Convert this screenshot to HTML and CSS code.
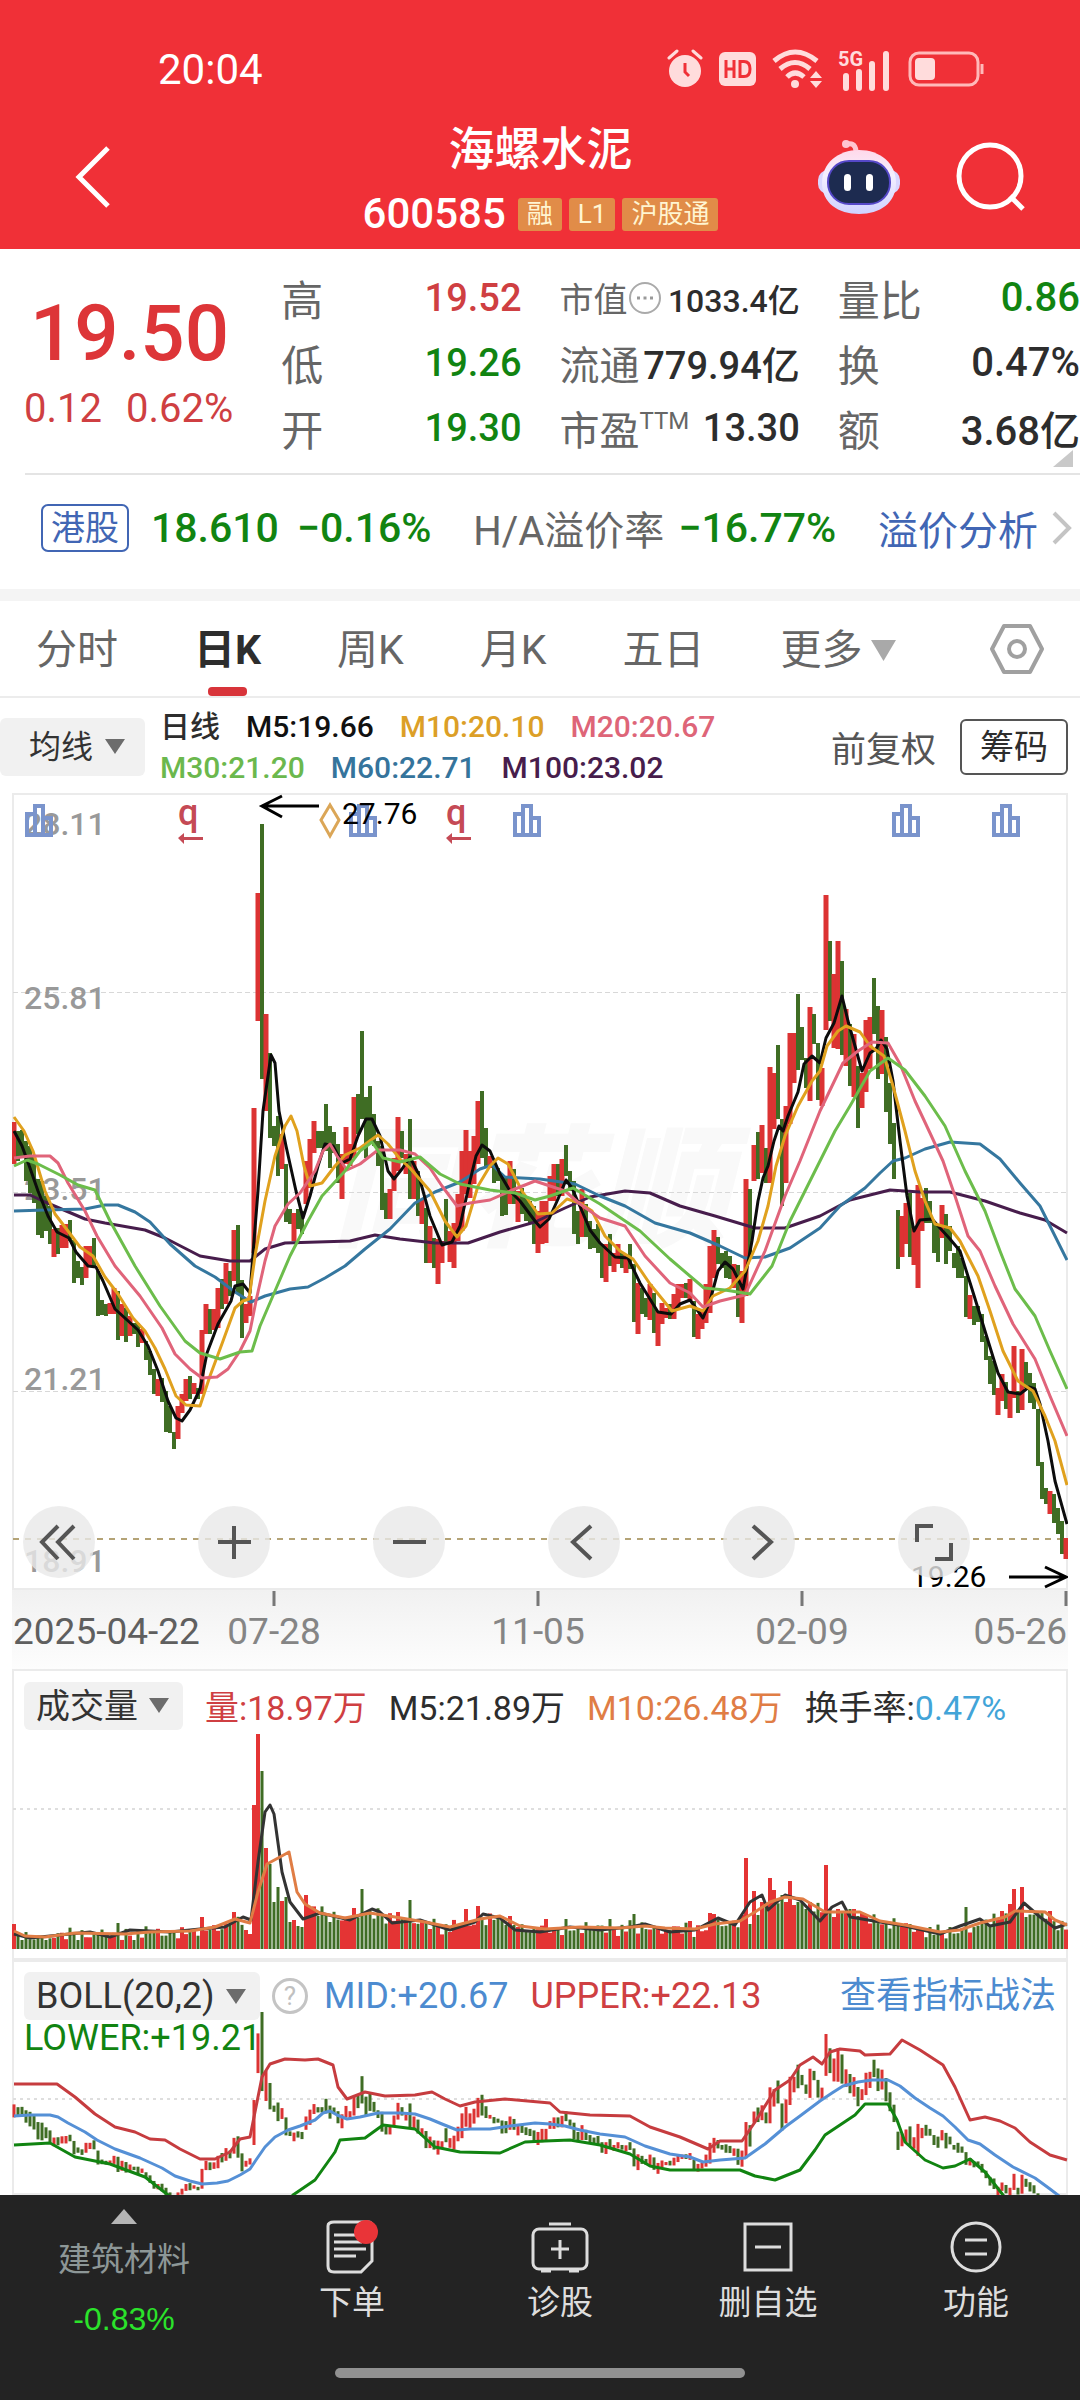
FILE: index.html
```html
<!DOCTYPE html>
<html lang="zh-CN">
<head>
    <meta charset="UTF-8">
    <meta name="viewport" content="width=device-width, initial-scale=1.0">
    <title>海螺水泥 600585</title>
    <link rel="stylesheet" href="styles.css">
</head>
<body>

<header>
    <div class="status-bar">
        <span class="time">20:04</span>
        <div class="status-icons">
            <svg width="36" height="40" viewBox="0 0 36 40">
                <circle cx="18" cy="22" r="16" fill="#ffdcdc"/>
                <path d="M2 9l8-7M34 9l-8-7" stroke="#ffdcdc" stroke-width="3" stroke-linecap="round"/>
                <path d="M18 14v9l4 4" stroke="#f03037" stroke-width="3" fill="none"/>
            </svg>
            <svg width="37" height="34" viewBox="0 0 37 34">
                <rect width="37" height="34" rx="6" fill="#ffdcdc"/>
                <path d="M7 8v18M15 8v18M7 17h8M21 9.500v15h4q6 0 6-7.500t-6-7.500z" fill="none" stroke="#f03037" stroke-width="3"/>
            </svg>
            <svg width="50" height="40" viewBox="0 0 50 40">
                <g fill="none" stroke="#ffdcdc" stroke-width="5">
                    <path d="M2 12q21-18 43 0"/>
                    <path d="M8 20q15-13 30 0"/>
                    <path d="M15 28q8-8 17 0"/>
                </g>
                <circle cx="23" cy="35" r="4" fill="#ffdcdc"/>
                <path d="M38 29l6-7 6 7zM38 32l6 7 6-7z" fill="#ffdcdc"/>
            </svg>
            <svg class="signal" width="54" height="46" viewBox="0 0 54 46">
                <text x="0" y="20">5G</text>
                <path d="M8 30v12M21 26v16M34 18v24M48 8v34" stroke="#ffdcdc" stroke-width="6" stroke-linecap="round"/>
            </svg>
            <svg width="76" height="36" viewBox="0 0 76 36">
                <rect x="2" y="2" width="68" height="32" rx="9" fill="none" stroke="#ffb9b9" stroke-width="3"/>
                <rect x="7" y="7" width="20" height="22" rx="4" fill="#ffdcdc"/>
                <path d="M74 13v10" stroke="#ffb9b9" stroke-width="3"/>
            </svg>
        </div>
    </div>
    <div class="title-bar">
        <button class="icon-button" aria-label="返回">
            <svg width="36" height="64" viewBox="0 0 36 64"><path d="M33 3L4 32l29 29" fill="none" stroke="#fff" stroke-width="5"/></svg>
        </button>
        <div class="stock-title">
            <h1>海螺水泥</h1>
            <div class="stock-code">
                <span class="code">600585</span>
                <span class="tag">融</span>
                <span class="tag">L1</span>
                <span class="tag">沪股通</span>
            </div>
        </div>
        <div class="title-actions">
            <button class="icon-button" aria-label="智能助手">
                <svg width="82" height="76" viewBox="0 0 82 76">
                    <defs>
                        <linearGradient id="bot-shell" x1="0" y1="0" x2="0" y2="1">
                            <stop offset="0" stop-color="#ffd9ea"/>
                            <stop offset="0.4" stop-color="#f4efff"/>
                            <stop offset="1" stop-color="#cfd2ff"/>
                        </linearGradient>
                    </defs>
                    <path d="M27 6q10-4 11 6" fill="none" stroke="#ffc4d2" stroke-width="5"/>
                    <circle cx="28" cy="5" r="4" fill="#ffc4d2"/>
                    <rect x="0" y="31" width="82" height="24" rx="10" fill="#d9d6ff"/>
                    <path d="M41 11C62 11 78 24 78 44C78 64 62 75 41 75C20 75 4 64 4 44C4 24 20 11 41 11z" fill="url(#bot-shell)"/>
                    <rect x="10" y="22" width="62" height="43" rx="21" fill="#1d2b50" stroke="#5548c8" stroke-width="2"/>
                    <rect x="26" y="35" width="7" height="17" rx="3.500" fill="#fff"/>
                    <rect x="48" y="35" width="7" height="17" rx="3.500" fill="#fff"/>
                </svg>
            </button>
            <button class="icon-button" aria-label="搜索">
                <svg width="70" height="70" viewBox="0 0 70 70"><circle cx="34" cy="34" r="31" fill="none" stroke="#fff" stroke-width="5"/><path d="M54 54l13 13" stroke="#fff" stroke-width="5"/></svg>
            </button>
        </div>
    </div>
</header>

<section class="quote">
    <div class="price">
        <div class="price-now">19.50</div>
        <div class="price-change"><span>0.12</span><span>0.62%</span></div>
    </div>
    <dl class="stats">
        <div><dt>高</dt><dd class="up">19.52</dd></div>
        <div><dt>低</dt><dd class="down">19.26</dd></div>
        <div><dt>开</dt><dd class="down">19.30</dd></div>
    </dl>
    <dl class="stats">
        <div class="small">
            <dt>市值<svg width="34" height="34" viewBox="0 0 34 34"><circle cx="17" cy="17" r="15" fill="none" stroke="#aaa" stroke-width="2"/><path d="M9 17h3M15.500 17h3M22 17h3" stroke="#999" stroke-width="3"/></svg></dt>
            <dd>1033.4亿</dd>
        </div>
        <div class="mid"><dt>流通</dt><dd>779.94亿</dd></div>
        <div class="mid"><dt>市盈<sup>TTM</sup></dt><dd>13.30</dd></div>
    </dl>
    <dl class="stats last">
        <div><dt>量比</dt><dd class="down">0.86</dd></div>
        <div><dt>换</dt><dd>0.47%</dd></div>
        <div><dt>额</dt><dd>3.68亿</dd></div>
    </dl>
    <span class="corner"></span>
</section>

<section class="premium">
    <span class="hk-tag">港股</span>
    <span class="hk-price">18.610</span>
    <span class="hk-change">−0.16%</span>
    <span class="ha-label">H/A溢价率</span>
    <span class="ha-rate">−16.77%</span>
    <a href="#premium">溢价分析<svg width="22" height="36" viewBox="0 0 22 36"><path d="M3 3l15 15L3 33" fill="none" stroke="#c4c4c4" stroke-width="4"/></svg></a>
</section>

<nav class="tabs">
    <button>分时</button>
    <button class="active">日K</button>
    <button>周K</button>
    <button>月K</button>
    <button>五日</button>
    <button class="more">更多<svg width="25" height="21" viewBox="0 0 25 21"><path d="M0 0h25L12.500 21z" fill="#a9a9a9"/></svg></button>
    <button class="settings" aria-label="设置">
        <svg width="54" height="52" viewBox="0 0 54 52"><path d="M14 3h26l12 23-12 23H14L2 26z" fill="none" stroke="#a0a0a0" stroke-width="4" stroke-linejoin="round"/><circle cx="27" cy="26" r="8" fill="none" stroke="#a0a0a0" stroke-width="4"/></svg>
    </button>
</nav>

<section class="ma-bar">
    <label class="picker picker-ma">
        <select aria-label="主图指标"><option>均线</option></select>
        <svg width="20" height="15" viewBox="0 0 20 15"><path d="M0 0h20L10 15z" fill="#6c6c6c"/></svg>
    </label>
    <div class="ma-values">
        <div><span>日线</span><span class="m5">M5:19.66</span><span class="m10">M10:20.10</span><span class="m20">M20:20.67</span></div>
        <div><span class="m30">M30:21.20</span><span class="m60">M60:22.71</span><span class="m100">M100:23.02</span></div>
    </div>
    <button class="adjust">前复权</button>
    <button class="chips">筹码</button>
</section>

<section class="main-chart">
    <svg id="kline" viewBox="12 792 1056 876">
        <defs>
            <linearGradient id="axis-fade" x1="0" y1="0" x2="0" y2="1">
                <stop offset="0" stop-color="#f1f1f1"/>
                <stop offset="1" stop-color="#fdfdfd"/>
            </linearGradient>
        </defs>
        <rect x="12" y="1589" width="1056" height="79" fill="url(#axis-fade)"/>
        <rect class="frame" x="13" y="793" width="1054" height="795"/>
        <text class="watermark" x="332" y="1235">同花顺</text>
        <path class="grid" d="M13 991.500H1067M13 1191.500H1067M13 1390.500H1067"/>
        <path class="last-price" d="M13 1538H1067"/>
        <g class="scale">
            <text x="24" y="834">28.11</text>
            <text x="24" y="1008">25.81</text>
            <text x="24" y="1199">23.51</text>
            <text x="24" y="1389">21.21</text>
            <text x="24" y="1571">18.91</text>
        </g>
        <g id="events"></g>
        <g id="candles"></g>
        <g id="averages"></g>
        <g class="arrow">
            <path d="M319 805H263M282 795l-20 10 20 11"/>
            <path d="M1009 1576h56M1045 1566l21 10-21 10"/>
        </g>
        <path d="M330 804l9 15-9 16-9-16z" fill="none" stroke="#dba657" stroke-width="3"/>
        <g class="extreme">
            <text x="342" y="823">27.76</text>
            <text x="911" y="1586">19.26</text>
        </g>
        <path d="M274 1590v15M538 1590v15M802 1590v15M1066 1590v15" stroke="#777" stroke-width="3"/>
        <g class="dates">
            <text class="first" x="13" y="1643">2025-04-22</text>
            <text x="274" y="1643" text-anchor="middle">07-28</text>
            <text x="538" y="1643" text-anchor="middle">11-05</text>
            <text x="802" y="1643" text-anchor="middle">02-09</text>
            <text x="1067" y="1643" text-anchor="end">05-26</text>
        </g>
    </svg>
    <div class="chart-tools">
        <button aria-label="最早"><svg viewBox="0 0 72 72"><path d="M35 20L19 36l16 17M51 20L35 36l16 17"/></svg></button>
        <button aria-label="放大"><svg viewBox="0 0 72 72"><path d="M20 36h33M36 20v33"/></svg></button>
        <button aria-label="缩小"><svg viewBox="0 0 72 72"><path d="M20 36h33"/></svg></button>
        <button aria-label="左移"><svg viewBox="0 0 72 72"><path d="M43 20L25 36l18 17"/></svg></button>
        <button aria-label="右移"><svg viewBox="0 0 72 72"><path d="M30 20l18 16-18 17"/></svg></button>
        <button aria-label="全屏"><svg viewBox="0 0 72 72"><path d="M19 36V20h16M53 37v16H37"/></svg></button>
    </div>
</section>

<section class="sub-chart">
    <div class="sub-head">
        <label class="picker">
            <select aria-label="副图指标一"><option>成交量</option></select>
            <svg width="20" height="15" viewBox="0 0 20 15"><path d="M0 0h20L10 15z" fill="#6c6c6c"/></svg>
        </label>
        <span class="vol-now">量:18.97万</span>
        <span>M5:21.89万</span>
        <span class="vol-m10">M10:26.48万</span>
        <span>换手率:<span class="turnover">0.47%</span></span>
    </div>
    <svg id="volume" viewBox="12 1730 1056 228">
        <path class="dots" d="M13 1807H1067"/>
    </svg>
</section>

<section class="sub-chart">
    <svg id="boll" viewBox="12 1958 1056 235">
        <path class="dots" d="M13 2097H1067"/>
    </svg>
    <div class="boll-head">
        <div class="sub-head">
            <label class="picker">
                <select aria-label="副图指标二"><option>BOLL(20,2)</option></select>
                <svg width="20" height="15" viewBox="0 0 20 15"><path d="M0 0h20L10 15z" fill="#6c6c6c"/></svg>
            </label>
            <button class="help">?</button>
            <span class="mid-value">MID:+20.67</span>
            <span class="upper-value">UPPER:+22.13</span>
            <a href="#tactics">查看指标战法</a>
        </div>
        <div class="lower-value">LOWER:+19.21</div>
    </div>
</section>

<footer>
    <nav class="bottom-nav">
        <a href="#sector" class="sector">
            <svg width="26" height="15" viewBox="0 0 26 15"><path d="M13 0l13 15H0z" fill="#b5b5b5"/></svg>
            <span class="sector-name">建筑材料</span>
            <span class="sector-change">-0.83%</span>
        </a>
        <a href="#order">
            <svg width="54" height="54" viewBox="0 0 54 54">
                <path d="M9 2h34q4 0 4 4v35L36 52H9q-6 0-6-6V6q0-4 6-4z"/>
                <path d="M9 15h24M9 22h28M9 29h32M9 36h22"/>
                <circle class="dot" cx="41" cy="12" r="12"/>
            </svg>
            <span>下单</span>
        </a>
        <a href="#diagnose">
            <svg width="58" height="54" viewBox="0 0 58 54">
                <rect x="2" y="9" width="54" height="40" rx="6"/>
                <path d="M18 4h22M20 29h18M29 20v19M10 51h10M38 51h10"/>
            </svg>
            <span>诊股</span>
        </a>
        <a href="#remove">
            <svg width="54" height="54" viewBox="0 0 54 54">
                <rect x="4" y="4" width="46" height="46"/>
                <path d="M14 27h26"/>
            </svg>
            <span>删自选</span>
        </a>
        <a href="#features">
            <svg width="54" height="54" viewBox="0 0 54 54">
                <circle cx="27" cy="27" r="24"/>
                <path d="M16 20h22M16 34h22"/>
            </svg>
            <span>功能</span>
        </a>
    </nav>
    <div class="home-bar"></div>
</footer>

<script src="chart.js"></script>
</body>
</html>
```

FILE: styles.css
```css
* {
    box-sizing: border-box;
}

body {
    margin: 0;
    font-family: Roboto, "Noto Sans CJK SC", sans-serif;
    background-color: #fff;
    color: #2d2d2d;
}

button, select {
    font: inherit;
    color: inherit;
    padding: 0;
    border: none;
    background: none;
}

button svg {
    display: block;
}

a {
    text-decoration: none;
}

header {
    height: 249px;
    background-color: #f03037;
    color: white;
}

.status-bar {
    display: flex;
    justify-content: space-between;
    align-items: center;
    padding: 44px 96px 0 158px;
    height: 94px;
}

.time {
    font-size: 42px;
}

.status-icons {
    display: flex;
    align-items: center;
    gap: 16px;
}

.signal {
    overflow: visible;
}

.signal text {
    font-size: 20px;
    font-weight: bold;
    fill: #ffdcdc;
}

.title-bar {
    display: grid;
    grid-template-columns: 1fr auto 1fr;
    align-items: center;
    padding: 20px 54px 0 75px;
}

.icon-button {
    padding-bottom: 4px;
}

.stock-title {
    text-align: center;
    padding-right: 20px;
}

h1 {
    margin: 0;
    font-size: 46px;
    font-weight: 500;
    line-height: 70px;
}

.stock-code {
    display: flex;
    align-items: center;
    gap: 7px;
    line-height: 60px;
}

.code {
    font-size: 42px;
    font-weight: 500;
    margin-right: 5px;
}

.tag {
    padding: 0 9px;
    font-size: 26px;
    line-height: 33px;
    border-radius: 3px;
    background-color: #e18c48;
    color: #fff5d2;
}

.title-actions {
    display: flex;
    justify-content: flex-end;
    align-items: center;
    gap: 56px;
}

.quote {
    position: relative;
    display: grid;
    grid-template-columns: 243fr 240fr 240fr 242fr;
    column-gap: 38px;
    height: 226px;
    padding-top: 16px;
}

.quote::after {
    content: "";
    position: absolute;
    left: 25px;
    right: 0;
    bottom: 0;
    border-bottom: 2px solid #e4e4e4;
}

.price {
    color: #dd3538;
}

.price-now {
    padding: 22px 0 0 30px;
    font-size: 78px;
    font-weight: 500;
    line-height: 94px;
}

.price-change {
    display: flex;
    gap: 24px;
    padding-left: 24px;
    font-size: 40px;
    line-height: 56px;
    color: #cf3f42;
}

.stats {
    margin: 0;
}

.stats div {
    display: flex;
    justify-content: space-between;
    align-items: center;
    height: 65px;
    white-space: nowrap;
}

.stats dt {
    display: flex;
    align-items: center;
    font-size: 42px;
    color: #666;
}

.stats dd {
    margin: 0;
    font-size: 38px;
    font-weight: 500;
}

.stats.last dd {
    font-size: 40px;
}

.stats .small dt {
    font-size: 34px;
}

.stats .small dd {
    font-size: 32px;
}

.stats .mid dt {
    font-size: 40px;
}

.stats .mid dd {
    font-size: 38px;
}

.stats sup {
    align-self: flex-start;
    font-size: 24px;
    line-height: 44px;
}

.stats .up {
    color: #cf3f42;
}

.stats .down {
    color: #118411;
}

.corner {
    position: absolute;
    right: 7px;
    bottom: 8px;
    border-left: 20px solid transparent;
    border-bottom: 17px solid #c9c9c9;
}

.premium {
    display: flex;
    align-items: center;
    height: 126px;
    padding: 0 7px 8px 41px;
    font-size: 41px;
    border-bottom: 12px solid #f4f4f4;
    white-space: nowrap;
}

.hk-tag {
    margin-right: 22px;
    padding: 0 8px;
    font-size: 34px;
    line-height: 44px;
    border: 2px solid #4166b4;
    border-radius: 7px;
    color: #4166b4;
}

.hk-price, .hk-change, .ha-rate {
    font-weight: 500;
    color: #118411;
}

.hk-price {
    margin-right: 18px;
}

.ha-label {
    margin-left: auto;
    margin-right: 14px;
    font-size: 40px;
    color: #666;
}

.premium a {
    display: flex;
    align-items: center;
    gap: 13px;
    margin-left: auto;
    font-size: 40px;
    color: #4166b4;
}

.tabs {
    display: flex;
    align-items: center;
    gap: 76px;
    height: 97px;
    padding: 0 36px;
    border-bottom: 2px solid #ececec;
}

.tabs button {
    position: relative;
    padding-top: 4px;
    font-size: 41px;
    line-height: 91px;
    color: #666;
    white-space: nowrap;
}

.tabs .active {
    font-weight: 700;
    color: #2d2d2d;
}

.tabs .active::after {
    content: "";
    position: absolute;
    left: 14px;
    right: 14px;
    bottom: 0;
    height: 9px;
    border-radius: 4px;
    background-color: #d8343a;
}

.tabs .more {
    display: flex;
    align-items: center;
    gap: 8px;
}

.tabs .settings {
    margin-left: auto;
    padding-top: 0;
}

.ma-bar {
    display: flex;
    align-items: center;
    height: 95px;
    padding: 2px 12px 0 0;
    font-size: 30px;
    white-space: nowrap;
}

.picker {
    display: flex;
    align-items: center;
    gap: 11px;
    height: 48px;
    padding: 0 14px 0 12px;
    border-radius: 6px;
    background-color: #f1f1f1;
}

.picker select {
    appearance: none;
    color: #333;
}

.picker-ma {
    height: 58px;
    margin-right: 15px;
    padding: 0 20px 0 29px;
    font-size: 32px;
}

.ma-values {
    font-weight: 500;
    line-height: 41px;
}

.ma-values div {
    display: flex;
    gap: 26px;
}

.m5 { color: #111; }
.m10 { color: #dc9f27; }
.m20 { color: #de6578; }
.m30 { color: #6bb84d; }
.m60 { color: #35749c; }
.m100 { color: #471d4c; }

.adjust {
    margin-left: auto;
    font-size: 35px;
    color: #555;
}

.chips {
    margin-left: 24px;
    padding: 0 18px;
    font-size: 34px;
    line-height: 52px;
    border: 2px solid #555;
    border-radius: 6px;
}

.main-chart {
    position: relative;
    padding: 0 12px;
}

.main-chart svg, .sub-chart > svg {
    display: block;
    width: 100%;
}

.frame {
    fill: none;
    stroke: #ebebeb;
    stroke-width: 2;
}

.watermark {
    font-size: 132px;
    font-weight: 900;
    font-style: italic;
    fill: #f9f9f9;
}

.grid {
    stroke: #d8d8d8;
    stroke-dasharray: 5 3;
}

.last-price {
    stroke: #b4a376;
    stroke-width: 2;
    stroke-dasharray: 6 6;
}

.scale text {
    font-size: 32px;
    font-weight: 500;
    fill: #999;
}

.event-q {
    font-size: 36px;
    font-weight: 500;
    fill: #c54a55;
}

.event-arrow {
    fill: #c54a55;
}

.event-report {
    fill: none;
    stroke: #7a94cc;
    stroke-width: 4;
}

.arrow path {
    fill: none;
    stroke: #000;
    stroke-width: 3;
}

.extreme text {
    font-size: 30px;
    fill: #000;
}

.dates text {
    font-size: 37px;
    fill: #858585;
}

.dates .first {
    fill: #5f5f5f;
}

.line {
    fill: none;
    stroke-width: 3;
    stroke-linejoin: round;
}

.chart-tools {
    position: absolute;
    left: 23px;
    right: 110px;
    bottom: 91px;
    display: flex;
    justify-content: space-between;
}

.chart-tools button {
    width: 72px;
    height: 72px;
    border-radius: 50%;
    background-color: rgba(232, 232, 232, 0.8);
}

.chart-tools path {
    fill: none;
    stroke: #555;
    stroke-width: 4;
}

.sub-chart {
    position: relative;
    margin: 0 12px;
    box-shadow: inset 0 0 0 2px #ebebeb;
}

.sub-head {
    display: flex;
    align-items: center;
    gap: 22px;
    padding: 12px 12px 2px;
    font-size: 34px;
    white-space: nowrap;
}

.vol-now { color: #cf3f42; }
.vol-m10 { color: #e07d45; }
.turnover { color: #42a4d8; }

.dots {
    stroke: #dedede;
    stroke-width: 2;
    stroke-dasharray: 3 4;
}

.boll-head {
    position: absolute;
    top: 0;
    left: 0;
    right: 0;
}

.boll-head .sub-head {
    gap: 16px;
    padding-bottom: 0;
    font-size: 36px;
}

.sub-head .help {
    width: 36px;
    height: 36px;
    margin-left: -4px;
    font-size: 26px;
    line-height: 30px;
    border: 3px solid #c4c4c4;
    border-radius: 50%;
    color: #c0c0c0;
}

.mid-value { color: #4c8bd0; }

.upper-value {
    margin-left: 6px;
    color: #cf3f42;
}

.sub-head a {
    margin-left: auto;
    font-size: 36px;
    line-height: 48px;
    color: #4c8bd0;
}

.lower-value {
    padding-left: 12px;
    font-size: 36px;
    line-height: 36px;
    color: #118411;
}

footer {
    position: relative;
    height: 207px;
    background-color: #232323;
}

.bottom-nav {
    display: grid;
    grid-template-columns: 248fr 208fr 208fr 208fr 208fr;
}

.bottom-nav a {
    display: flex;
    flex-direction: column;
    align-items: center;
    padding-top: 25px;
    font-size: 33px;
    line-height: 57px;
    color: #ddd;
}

.bottom-nav a:not(.sector) svg {
    fill: none;
    stroke: #ddd;
    stroke-width: 3;
}

.bottom-nav .dot {
    fill: #e93438;
    stroke: none;
}

.bottom-nav .sector {
    padding-top: 14px;
}

.sector-name {
    margin-top: 7px;
    color: #8d9797;
}

.sector-change {
    font-family: "Liberation Sans", sans-serif;
    font-size: 32px;
    line-height: 62px;
    color: #2be32b;
}

.home-bar {
    position: absolute;
    left: 31%;
    right: 31%;
    bottom: 24px;
    height: 10px;
    border-radius: 5px;
    background-color: #919191;
}
```

FILE: chart.js
```js
const RED = '#dc3333';
const GREEN = '#3f6d24';
const STEP = 4;
const START = 14;

// One entry per trading day: colour, top and bottom of the bar
const days = `
r1121,1163 g1130,1160 g1129,1157 g1140,1180 g1145,1192 g1155,1202 g1178,1234 g1180,1237 g1195,1230 g1205,1243
r1228,1256 g1227,1253 r1224,1247 r1223,1247 g1219,1240 g1239,1282 g1260,1277 g1266,1284 r1245,1277 r1245,1265
g1237,1266 g1270,1315 g1299,1314 g1303,1315 r1302,1313 r1287,1313 g1290,1339 r1303,1335 g1307,1341 r1315,1335
g1322,1333 g1322,1346 r1328,1342 g1340,1359 g1350,1374 g1368,1393 r1378,1395 g1377,1401 g1390,1431 g1405,1432
g1431,1448 r1405,1438 r1393,1412 r1378,1400 g1375,1398 r1382,1393 g1387,1398 r1329,1393 r1303,1333 g1308,1333
r1308,1329 r1287,1327 g1278,1308 r1262,1303 g1270,1295 r1229,1280 g1224,1293 g1279,1337 r1303,1322 r1295,1315
r1107,1252 r892,1020 g823,1078 r1013,1110 g1052,1137 g1125,1145 g1115,1175 r1133,1168 g1163,1221 g1208,1223
r1212,1240 g1208,1228 g1210,1233 r1160,1203 r1138,1187 r1120,1152 g1130,1147 g1130,1147 g1103,1150 g1125,1167
g1131,1152 g1143,1182 r1153,1198 r1126,1163 r1143,1165 r1096,1157 g1093,1133 g1030,1118 g1096,1157 g1085,1142
g1113,1145 g1140,1165 g1145,1209 g1192,1218 r1188,1218 r1157,1190 r1116,1170 g1130,1157 r1153,1173 g1118,1198
r1160,1198 g1170,1215 r1198,1223 g1207,1262 r1225,1262 g1237,1267 r1238,1283 r1240,1262 g1198,1243 r1230,1261
r1222,1267 r1193,1240 r1150,1230 r1129,1193 r1150,1197 r1135,1183 r1100,1163 g1090,1157 g1127,1165 r1155,1167
g1162,1182 g1167,1180 g1173,1215 g1175,1214 r1160,1203 g1168,1203 r1190,1221 g1187,1213 g1195,1220 g1200,1223
g1205,1243 r1210,1252 r1200,1243 r1200,1242 r1175,1200 r1163,1200 g1163,1195 r1158,1195 g1144,1175 g1170,1190
g1180,1233 g1210,1243 r1188,1236 g1203,1236 g1220,1248 g1228,1247 g1223,1252 g1243,1277 r1243,1281 g1233,1265
r1252,1271 r1243,1263 g1252,1267 r1253,1272 g1243,1268 g1263,1321 r1282,1333 g1287,1313 g1297,1316 r1283,1319
g1292,1332 r1310,1345 r1302,1323 r1307,1317 g1303,1318 r1293,1318 r1283,1307 r1283,1297 g1282,1297 r1278,1300
g1300,1336 r1313,1338 r1310,1328 r1283,1322 r1245,1312 r1229,1277 g1236,1263 g1252,1267 g1250,1277 g1255,1278
r1263,1287 g1264,1316 r1270,1322 r1178,1295 g1188,1257 r1144,1180 g1131,1178 r1124,1172 g1147,1182 r1066,1182
r1072,1128 g1044,1118 g1118,1205 r1105,1182 r1032,1123 r1032,1082 g993,1069 g1026,1059 g1057,1087 r1006,1100
g1013,1043 g1042,1099 r1067,1105 r894,1029 g940,1020 r973,1047 r940,1048 g960,1054 r1008,1065 g1023,1085
r1033,1096 g1065,1127 r1072,1107 r1019,1091 r1016,1068 g977,1033 g1005,1078 r1009,1073 g1036,1111 g1082,1143
g1122,1178 g1209,1268 r1215,1256 r1202,1243 g1192,1256 r1227,1264 r1184,1287 r1197,1230 g1187,1222 g1200,1222
g1220,1252 g1225,1261 r1204,1237 g1213,1263 g1225,1250 g1252,1267 g1245,1277 g1257,1277 g1275,1316 r1294,1318
g1305,1324 g1305,1321 g1313,1341 g1335,1359 g1355,1383 g1360,1394 r1387,1414 r1373,1400 g1381,1408 r1390,1417
r1345,1397 g1390,1412 r1348,1409 g1361,1387 g1372,1402 g1382,1408 g1408,1465 g1461,1498 g1487,1503 r1490,1513
g1493,1522 g1507,1533 g1520,1553 r1537,1558
`.trim().split(/\s+/).map(function (item) {
    const [top, bottom] = item.slice(1).split(',').map(Number);
    return { up: item[0] === 'r', top, bottom };
});

const averages = {
    m100: '14,1194 30,1194 45,1201 85,1218 105,1222 145,1229 165,1237 200,1255 230,1260 250,1260 265,1248 285,1242 350,1240 375,1234 400,1238 435,1242 468,1242 500,1231 535,1221 565,1207 590,1196 625,1190 650,1192 680,1205 715,1215 755,1227 785,1227 820,1215 850,1199 890,1189 920,1191 950,1191 985,1200 1020,1212 1045,1219 1067,1232',
    m60: '14,1210 45,1209 85,1208 105,1204 118,1204 135,1211 150,1221 170,1243 195,1265 215,1276 235,1291 251,1301 265,1295 290,1288 308,1286 325,1277 345,1265 365,1248 390,1228 415,1202 435,1191 460,1181 480,1168 492,1164 505,1176 540,1178 575,1183 600,1195 625,1205 655,1222 690,1232 720,1245 745,1257 765,1256 790,1247 820,1227 840,1205 865,1187 880,1172 893,1160 905,1157 925,1148 950,1141 980,1143 1000,1158 1020,1182 1040,1205 1067,1259',
    m5: '14,1130 22,1145 30,1167 38,1190 48,1215 57,1231 69,1237 76,1251 88,1265 96,1266 103,1280 115,1308 126,1318 138,1329 148,1345 158,1370 168,1400 176,1417 182,1420 190,1409 200,1388 207,1352 218,1323 231,1300 235,1285 243,1283 250,1292 254,1240 258,1190 263,1110 271,1054 275,1062 279,1110 286,1145 296,1190 303,1217 310,1195 318,1165 325,1143 333,1145 342,1162 350,1158 358,1135 366,1118 372,1118 380,1135 388,1170 394,1178 402,1168 410,1156 418,1172 430,1215 442,1244 452,1241 460,1225 470,1180 476,1155 482,1144 490,1150 500,1173 510,1190 520,1200 535,1220 540,1226 549,1218 558,1198 566,1179 572,1187 582,1210 590,1229 600,1242 615,1256 628,1257 640,1282 658,1311 671,1313 680,1303 690,1299 703,1317 710,1300 718,1270 725,1261 733,1268 743,1288 752,1240 758,1200 763,1177 768,1165 774,1140 779,1125 783,1130 788,1115 798,1091 804,1063 812,1055 820,1062 826,1037 834,1022 842,995 848,1020 855,1045 862,1070 870,1052 876,1048 881,1039 887,1048 893,1080 900,1140 907,1195 914,1230 920,1219 932,1218 940,1227 950,1238 960,1250 972,1288 985,1330 998,1372 1008,1391 1020,1393 1029,1386 1035,1388 1040,1403 1048,1440 1055,1480 1067,1523',
    m10: '14,1116 24,1130 33,1150 45,1190 55,1213 68,1230 80,1246 93,1255 105,1276 118,1293 133,1317 145,1330 155,1347 165,1368 176,1395 186,1404 200,1405 210,1375 223,1340 235,1307 243,1300 249,1298 255,1255 265,1200 275,1155 285,1125 291,1115 297,1130 304,1165 310,1185 322,1182 335,1165 345,1154 360,1147 378,1134 388,1143 400,1158 410,1167 430,1190 445,1220 457,1236 466,1225 478,1185 490,1165 498,1157 508,1163 522,1190 538,1213 552,1212 567,1198 580,1202 592,1210 605,1235 620,1250 633,1258 650,1283 672,1310 690,1305 703,1310 713,1295 730,1287 745,1270 758,1240 768,1205 776,1165 785,1135 798,1105 812,1080 820,1070 827,1045 838,1030 846,1025 860,1031 870,1045 884,1055 893,1085 905,1130 915,1170 925,1200 935,1223 950,1227 960,1240 978,1275 990,1310 1003,1350 1018,1380 1033,1390 1045,1415 1055,1440 1067,1484',
    m20: '14,1157 30,1155 50,1155 58,1162 68,1182 85,1210 97,1235 115,1265 140,1295 162,1327 175,1353 190,1368 202,1377 217,1376 228,1368 240,1350 250,1330 256,1300 265,1260 275,1225 288,1203 300,1192 315,1170 323,1150 330,1143 337,1155 347,1169 360,1163 378,1149 400,1149 415,1153 430,1167 442,1185 457,1205 470,1202 490,1199 510,1190 535,1180 550,1185 565,1190 580,1203 600,1217 625,1225 645,1255 670,1282 690,1292 703,1306 720,1300 745,1294 765,1250 785,1195 800,1160 820,1110 832,1085 843,1062 858,1050 872,1041 888,1042 900,1063 915,1100 930,1132 943,1160 955,1195 968,1235 980,1250 995,1285 1013,1323 1035,1358 1050,1395 1067,1435',
    m30: '14,1165 27,1159 38,1163 60,1174 78,1184 95,1189 110,1220 135,1265 160,1305 185,1340 200,1352 220,1358 240,1351 252,1350 260,1325 275,1290 290,1255 308,1220 322,1195 345,1170 360,1150 372,1141 383,1157 400,1161 420,1156 440,1173 460,1183 490,1189 515,1192 535,1199 550,1195 573,1187 600,1203 640,1230 670,1258 704,1287 725,1289 750,1293 772,1265 790,1220 810,1180 835,1130 850,1105 870,1070 888,1057 905,1069 925,1095 945,1125 965,1170 985,1210 1000,1250 1015,1288 1035,1315 1050,1350 1067,1388'
};

const averageColors = {
    m5: '#0c0c0c', m10: '#e0a11e', m20: '#e0647a', m30: '#6cbd4b', m60: '#35779f', m100: '#471d4c'
};

const volumeM5 = '14,1932 30,1936 60,1933 90,1930 110,1935 130,1928 170,1930 200,1927 225,1925 243,1915 251,1918 258,1860 265,1810 270,1803 274,1812 282,1870 290,1900 303,1917 320,1911 350,1918 372,1907 380,1910 392,1921 420,1918 450,1928 475,1920 483,1912 500,1916 515,1928 540,1930 570,1925 600,1928 630,1925 645,1922 670,1930 695,1928 718,1916 735,1923 750,1900 762,1893 768,1908 785,1893 800,1898 820,1919 832,1905 842,1900 850,1915 880,1920 905,1924 940,1932 960,1924 980,1917 990,1924 1010,1920 1024,1901 1040,1915 1055,1926 1067,1922';
const volumeM10 = '14,1929 25,1934 45,1935 75,1931 125,1932 150,1930 190,1929 215,1925 235,1917 250,1921 258,1890 267,1862 280,1855 289,1850 297,1890 305,1902 320,1911 345,1916 370,1911 395,1915 425,1920 450,1925 480,1917 500,1914 520,1924 545,1927 580,1925 620,1926 645,1924 665,1926 695,1927 715,1922 740,1919 755,1910 770,1900 785,1895 803,1897 825,1910 860,1910 880,1919 905,1923 940,1930 960,1928 980,1921 1005,1915 1015,1909 1045,1910 1055,1918 1067,1923';

// Heavy trading days, by index
const volumePeaks = {
    26: 1921, 47: 1915, 55: 1910, 58: 1928, 59: 1932, 60: 1803, 61: 1732, 62: 1769, 63: 1846, 64: 1862, 65: 1900, 66: 1885,
    67: 1899, 68: 1895, 69: 1920, 70: 1918, 71: 1924, 72: 1925, 73: 1893, 74: 1905, 85: 1906, 87: 1887, 96: 1910,
    99: 1898, 113: 1907, 116: 1904, 133: 1917, 138: 1917, 149: 1917, 155: 1912, 169: 1919, 174: 1911, 175: 1912,
    183: 1856, 185: 1889, 189: 1876, 190: 1888, 192: 1893, 194: 1879, 198: 1907, 203: 1863, 204: 1907, 206: 1907,
    238: 1905, 247: 1909, 249: 1902, 250: 1887, 252: 1885, 253: 1915, 256: 1910
};

const bollUpper = '14,2082 57,2082 75,2095 95,2112 115,2125 135,2130 150,2137 165,2138 180,2147 200,2157 215,2157 230,2150 240,2137 250,2135 255,2110 262,2075 270,2062 285,2057 305,2058 318,2057 333,2063 338,2085 347,2097 365,2090 385,2094 415,2093 432,2090 445,2097 460,2104 475,2100 505,2097 550,2101 560,2110 590,2113 630,2114 650,2125 680,2135 708,2147 720,2139 742,2139 755,2120 775,2088 790,2078 800,2063 813,2055 822,2062 830,2050 840,2047 860,2049 865,2053 890,2052 902,2038 920,2048 943,2063 955,2085 970,2118 985,2115 1000,2119 1015,2126 1030,2140 1050,2153 1067,2158';
const bollLower = '14,2143 50,2141 75,2155 110,2162 145,2175 168,2193 190,2225 270,2225 293,2193 315,2178 335,2150 340,2138 365,2136 383,2123 415,2127 435,2145 460,2150 500,2151 525,2140 545,2139 570,2138 600,2143 630,2152 650,2164 670,2168 740,2168 755,2174 775,2178 790,2172 800,2168 815,2148 825,2133 840,2123 855,2113 865,2102 888,2102 897,2118 905,2140 925,2158 943,2166 955,2164 970,2157 985,2170 1003,2193 1020,2215';

function toPoints(text) {
    return text.split(' ').map(pair => pair.split(',').map(Number));
}

function bar(x, top, bottom, width, color) {
    return `<rect x="${x - width / 2}" y="${top}" width="${width}" height="${bottom - top}" fill="${color}"/>`;
}

function line(points, color) {
    return `<polyline class="line" points="${points.join(' ')}" stroke="${color}"/>`;
}

function valueAt(points, x) {
    for (let i = 1; i < points.length; i++) {
        if (x <= points[i][0]) {
            const [x0, y0] = points[i - 1];
            const [x1, y1] = points[i];
            return y0 + (y1 - y0) * (x - x0) / (x1 - x0);
        }
    }
    return points[points.length - 1][1];
}

// The lower panel shows the same prices on a flatter scale
function bollY(y) {
    return 2010 + (y - 823) * 0.31;
}

function drawKline() {
    document.getElementById('candles').innerHTML = days.map((day, i) =>
        bar(START + i * STEP, day.top, day.bottom, day.up ? 5 : 4, day.up ? RED : GREEN)).join('');
    document.getElementById('averages').innerHTML = Object.keys(averages).map(name =>
        line(toPoints(averages[name]), averageColors[name])).join('');
}

function drawEvents() {
    const reports = [27, 351, 515, 894, 994].map(x =>
        `<path class="event-report" d="M${x} 813h8v21h-8zM${x + 8} 805h8v29h-8zM${x + 16} 817h8v17h-8z"/>`);
    const dividends = [178, 446].map(x =>
        `<text class="event-q" x="${x}" y="824">q</text>
        <path class="event-arrow" d="M${x} 837l6-5v4h19v3h-19v4z"/>`);
    document.getElementById('events').innerHTML = reports.concat(dividends).join('');
}

function drawVolume() {
    const base = toPoints(volumeM10);
    const bars = days.map(function (day, i) {
        const x = START + i * STEP;
        const swing = (i * 37 % 11) + (i * 17 % 7) - 7;
        const top = volumePeaks[i] || Math.min(1938, Math.max(1900, valueAt(base, x) + swing));
        return bar(x, top, 1947, day.up ? 4 : 3, day.up ? '#e43434' : GREEN);
    });
    document.getElementById('volume').innerHTML += bars.join('') +
        line(toPoints(volumeM5), '#333') + line(base, '#e07d45');
}

function drawBoll() {
    const bars = days.map((day, i) =>
        bar(START + i * STEP, bollY(day.top), bollY(day.bottom), 3, day.up ? RED : GREEN));
    const middle = toPoints(averages.m20).map(([x, y]) => [x, Math.round(bollY(y))]);
    document.getElementById('boll').innerHTML += bars.join('') +
        line(toPoints(bollUpper), '#c63c3f') + line(toPoints(bollLower), '#118411') + line(middle, '#5590d6');
}

drawEvents();
drawKline();
drawVolume();
drawBoll();
```
